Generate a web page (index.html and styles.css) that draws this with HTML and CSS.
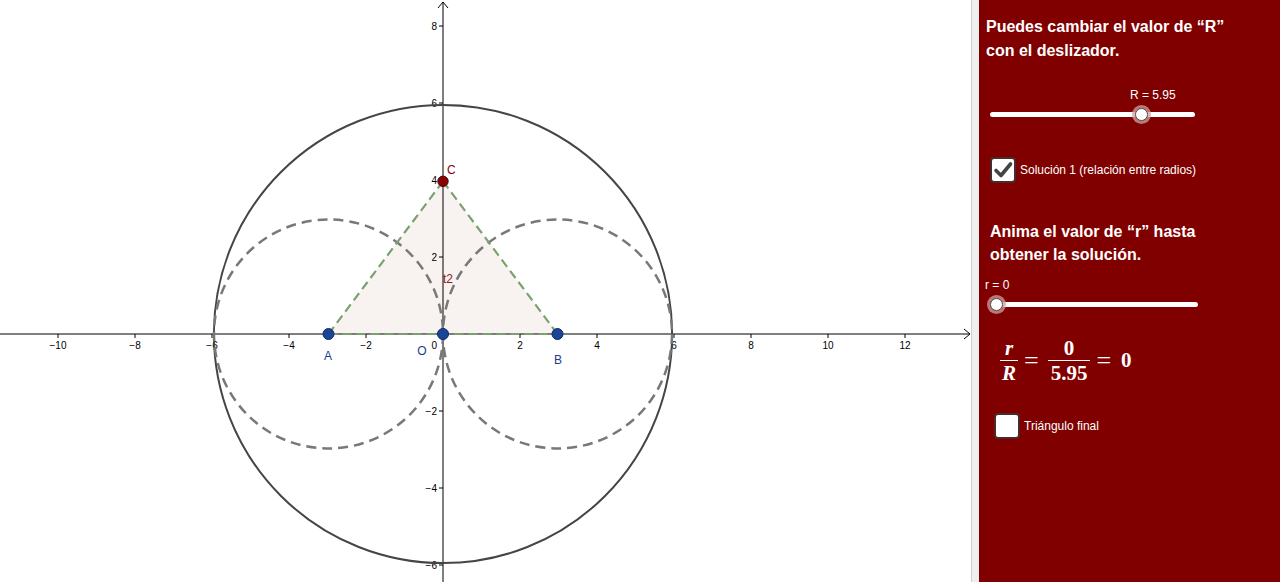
FILE: index.html
```html
<!DOCTYPE html>
<html lang="es">
<head>
<meta charset="utf-8">
<title>Relación entre radios</title>
<link rel="stylesheet" href="styles.css">
</head>
<body>
<div class="app">
  <div class="graphics">
    <svg class="plot" width="971" height="582" viewBox="0 0 971 582" xmlns="http://www.w3.org/2000/svg">
      <polygon points="328.5,334 557.5,334 443,181.3" fill="#f8f3f1"/>
      <g stroke="#000" stroke-width="1" fill="none">
        <line x1="0" y1="334" x2="970" y2="334"/>
        <polyline points="964,329 970,334 964,339"/>
        <line x1="443" y1="582" x2="443" y2="2"/>
        <polyline points="438,8 443,2 448,8"/>
        <line x1="58" y1="334" x2="58" y2="338"/>
        <line x1="135" y1="334" x2="135" y2="338"/>
        <line x1="212" y1="334" x2="212" y2="338"/>
        <line x1="289" y1="334" x2="289" y2="338"/>
        <line x1="366" y1="334" x2="366" y2="338"/>
        <line x1="520" y1="334" x2="520" y2="338"/>
        <line x1="597" y1="334" x2="597" y2="338"/>
        <line x1="674" y1="334" x2="674" y2="338"/>
        <line x1="751" y1="334" x2="751" y2="338"/>
        <line x1="828" y1="334" x2="828" y2="338"/>
        <line x1="905" y1="334" x2="905" y2="338"/>
        <line x1="439" y1="26" x2="443" y2="26"/>
        <line x1="439" y1="103" x2="443" y2="103"/>
        <line x1="439" y1="180" x2="443" y2="180"/>
        <line x1="439" y1="257" x2="443" y2="257"/>
        <line x1="439" y1="411" x2="443" y2="411"/>
        <line x1="439" y1="488" x2="443" y2="488"/>
        <line x1="439" y1="565" x2="443" y2="565"/>
      </g>
      <g class="ticks" font-size="10" fill="#000" text-anchor="middle">
        <text x="58" y="349">−10</text>
        <text x="135" y="349">−8</text>
        <text x="212" y="349">−6</text>
        <text x="289" y="349">−4</text>
        <text x="366" y="349">−2</text>
        <text x="520" y="349">2</text>
        <text x="597" y="349">4</text>
        <text x="674" y="349">6</text>
        <text x="751" y="349">8</text>
        <text x="828" y="349">10</text>
        <text x="905" y="349">12</text>
      </g>
      <g class="ticks" font-size="10" fill="#000" text-anchor="end">
        <text x="437" y="30">8</text>
        <text x="437" y="107">6</text>
        <text x="437" y="184">4</text>
        <text x="437" y="261">2</text>
        <text x="437" y="349">0</text>
        <text x="437" y="415">−2</text>
        <text x="437" y="492">−4</text>
        <text x="437" y="569">−6</text>
      </g>
      <circle cx="443" cy="334" r="229.1" fill="none" stroke="#454545" stroke-width="2"/>
      <g fill="none" stroke="#787878" stroke-width="2.5" stroke-dasharray="10 6">
        <circle cx="328.5" cy="334" r="114.5"/>
        <circle cx="557.5" cy="334" r="114.5"/>
      </g>
      <g fill="none" stroke="#7aa170" stroke-width="2.2" stroke-dasharray="9 5">
        <line x1="328.5" y1="334" x2="443" y2="181.3"/>
        <line x1="557.5" y1="334" x2="443" y2="181.3"/>
        <line x1="328.5" y1="334" x2="557.5" y2="334"/>
      </g>
      <g stroke="#0b2a66" stroke-width="1">
        <circle cx="328.5" cy="334" r="5.5" fill="#1a4596"/>
        <circle cx="557.5" cy="334" r="5.5" fill="#1a4596"/>
        <circle cx="443" cy="334" r="5.5" fill="#1a4596"/>
        <circle cx="443" cy="181.3" r="5.2" fill="#8b0000" stroke="#4a0000"/>
      </g>
      <g class="labels" font-size="12">
        <text x="328" y="360" fill="#1a3c8c" text-anchor="middle">A</text>
        <text x="558" y="364" fill="#1a3c8c" text-anchor="middle">B</text>
        <text x="422" y="355" fill="#1a3c8c" text-anchor="middle">O</text>
        <text x="447" y="174" fill="#8b0000">C</text>
        <text x="443" y="283" fill="#8b1a1a">t2</text>
      </g>
    </svg>
  </div>
  <div class="divider"></div>
  <div class="panel">
    <p class="heading first">Puedes cambiar el valor de “R”<br>con el deslizador.</p>
    <div class="slider slider-r">
      <div class="slabel">R = 5.95</div>
      <div class="track"><span class="knob" style="left:73.7%"></span></div>
    </div>
    <label class="check check-one">
      <span class="box checked">
        <svg width="22" height="22" viewBox="0 0 22 22"><path d="M4 11.5 L9 16.5 L18.5 5" fill="none" stroke="#444" stroke-width="3.6" stroke-linecap="round" stroke-linejoin="round"/></svg>
      </span>
      <span class="ctext">Solución 1 (relación entre radios)</span>
    </label>
    <p class="heading second">Anima el valor de “r” hasta<br>obtener la solución.</p>
    <div class="slider slider-small">
      <div class="slabel">r = 0</div>
      <div class="track"><span class="knob" style="left:0%"></span></div>
    </div>
    <div class="formula">
      <span class="frac"><span class="num"><i>r</i></span><span class="den"><i>R</i></span></span>
      <span class="op">=</span>
      <span class="frac wide"><span class="num">0</span><span class="den">5.95</span></span>
      <span class="op">=</span>
      <span class="val">0</span>
    </div>
    <label class="check check-two">
      <span class="box"></span>
      <span class="ctext">Triángulo final</span>
    </label>
  </div>
</div>
</body>
</html>
```

FILE: styles.css
```css
* { box-sizing: border-box; }
html, body {
  margin: 0;
  padding: 0;
  width: 1280px;
  height: 582px;
  overflow: hidden;
  font-family: "Liberation Sans", Arial, sans-serif;
}
.app {
  display: flex;
  width: 1280px;
  height: 582px;
}
.graphics {
  width: 971px;
  height: 582px;
  background: #fff;
  flex: none;
}
.plot { display: block; }
.plot text { font-family: "Liberation Sans", Arial, sans-serif; }
.divider {
  width: 8px;
  flex: none;
  background: #efefef;
  border-left: 1px solid #cfcfcf;
}
.panel {
  flex: 1;
  background: #800000;
  color: #fff;
  display: flex;
  flex-direction: column;
  align-items: flex-start;
}
.heading {
  margin: 0;
  font-weight: bold;
  font-size: 16px;
  line-height: 24px;
  white-space: nowrap;
}
.heading.first { margin-top: 15px; padding-left: 7px; }
.heading.second { margin-top: 37px; padding-left: 11px; line-height: 23px; }
.slider { position: relative; }
.slabel {
  font-size: 12px;
  line-height: 14px;
}
.slider-r { margin-top: 25px; padding-left: 11px; }
.slider-r .slabel { padding-left: 140px; }
.slider-r .track { width: 205px; margin-top: 10px; }
.slider-small { margin-top: 12px; padding-left: 6px; }
.slider-small .track { width: 202px; margin-top: 10px; margin-left: 11px; }
.track {
  position: relative;
  height: 5px;
  border-radius: 3px;
  background: #fff;
}
.knob {
  position: absolute;
  top: 50%;
  width: 13px;
  height: 13px;
  margin: -6.5px 0 0 -6.5px;
  border-radius: 50%;
  background: #fff;
  border: 1px solid #4a4a4a;
  box-shadow: 0 0 0 3px rgba(210, 160, 160, 0.75);
}
.check {
  display: flex;
  align-items: center;
  gap: 4px;
}
.check-one { margin-top: 40px; padding-left: 11px; }
.check-two { margin-top: 29px; padding-left: 15px; }
.box {
  width: 26px;
  height: 26px;
  border-radius: 4px;
  background: #fff;
  border: 2px solid #4a2a2a;
  display: flex;
  align-items: center;
  justify-content: center;
}
.ctext { font-size: 12px; line-height: 14px; }
.formula {
  margin-top: 30px;
  padding-left: 21px;
  display: flex;
  align-items: center;
  font-family: "Liberation Serif", "Times New Roman", serif;
  font-weight: bold;
  font-size: 21px;
  color: #fff;
}
.frac {
  display: inline-flex;
  flex-direction: column;
  align-items: stretch;
  text-align: center;
}
.num {
  line-height: 22px;
  padding: 0 2px 1px;
  border-bottom: 1.5px solid #fff;
}
.den { line-height: 22px; padding: 1px 2px 0; }
.frac.wide .num, .frac.wide .den { padding-left: 3px; padding-right: 3px; }
.op { margin: 0 9px 0 6px; font-size: 26px; font-weight: normal; }
.val { margin-left: 1px; }
```
